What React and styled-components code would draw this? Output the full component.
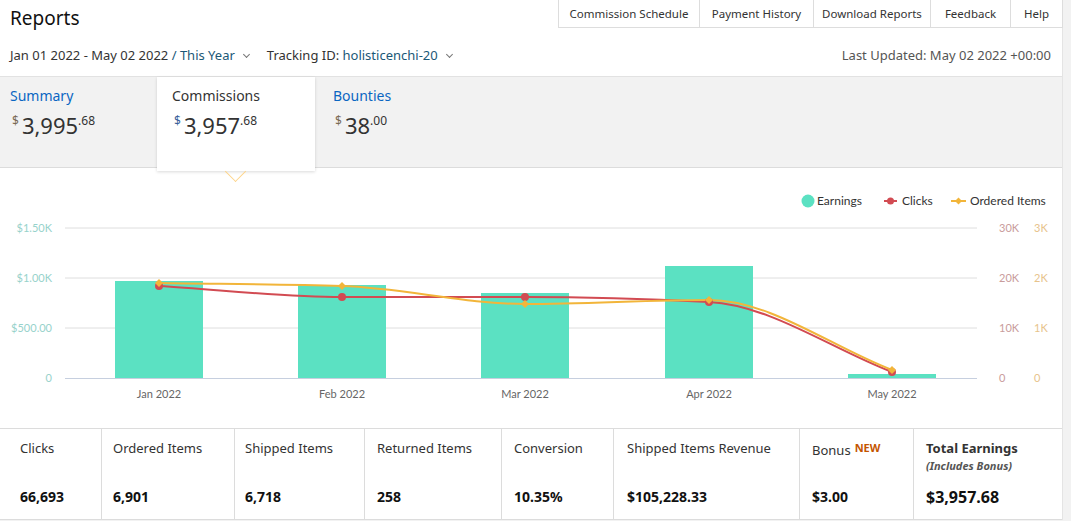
import React from 'react';
import styled, { createGlobalStyle } from 'styled-components';

const GlobalStyle = createGlobalStyle`
  body {
    margin: 0;
    background: #f2f2f2;
    font-family: "Noto Sans", "Open Sans", Arial, sans-serif;
    color: #333;
  }
`;

const Page = styled.div`
  width: 1063px;
  background: #fff;
  border-right: 1px solid #e4e4e4;
  box-sizing: border-box;
`;

const TopBar = styled.div`
  display: flex;
  justify-content: space-between;
  align-items: flex-start;
  height: 36px;
`;

const Title = styled.h1`
  margin: 0;
  padding: 5px 10px;
  font-size: 19px;
  font-weight: 400;
  line-height: 26px;
  color: #111;
`;

const Nav = styled.nav`
  display: flex;
  border-left: 1px solid #ddd;
  border-bottom: 1px solid #ddd;
  height: 27px;
  margin-right: -1px;
`;

const NavItem = styled.a`
  display: flex;
  align-items: center;
  justify-content: center;
  width: ${p => p.w}px;
  box-sizing: border-box;
  font-size: 11.5px;
  color: #333;
  border-right: 1px solid #ddd;
`;

const FilterRow = styled.div`
  display: flex;
  align-items: center;
  justify-content: space-between;
  height: 38px;
  padding: 0 11px 2px 10px;
  font-size: 13px;
`;

const Filters = styled.div`
  display: flex;
  gap: 16px;
`;

const Dropdown = styled.span`
  display: inline-flex;
  align-items: center;
  gap: 7px;
  color: #333;
`;

const Accent = styled.span`
  color: #1b5877;
`;

const Caret = styled.span`
  display: inline-block;
  width: 4px;
  height: 4px;
  border-right: 1px solid #777;
  border-bottom: 1px solid #777;
  transform: rotate(45deg);
  margin: 0 2px 2px;
`;

const Updated = styled.span`
  color: #555;
`;

const Band = styled.div`
  display: flex;
  align-items: flex-start;
  height: 90px;
  background: #f2f2f2;
  border-top: 1px solid #e2e2e2;
  border-bottom: 1px solid #dcdcdc;
`;

const Tab = styled.div`
  position: relative;
  width: ${p => (p.active ? 158 : 157)}px;
  height: ${p => (p.active ? 94 : 90)}px;
  box-sizing: border-box;
  padding: 9px 15px 0 ${p => p.pl || 15}px;
  background: ${p => (p.active ? '#fff' : 'transparent')};
  box-shadow: ${p => (p.active ? '0 1px 3px rgba(0,0,0,0.15)' : 'none')};
  z-index: ${p => (p.active ? 2 : 0)};

  &::after {
    content: '';
    display: ${p => (p.active ? 'block' : 'none')};
    position: absolute;
    left: 50%;
    top: calc(100% - 7px);
    width: 14px;
    height: 14px;
    margin-left: -8px;
    border-right: 1.5px solid #fdd489;
    border-bottom: 1.5px solid #fdd489;
    transform: rotate(45deg);
  }
`;

const TabLabel = styled.div`
  font-size: 14px;
  line-height: 20px;
  color: ${p => (p.active ? '#333' : '#0a66c2')};
`;

const Amount = styled.div`
  margin-top: 5px;
  font-size: 22px;
  line-height: 28px;
  color: #333;

  sup {
    font-size: 12px;
    vertical-align: 9px;
    line-height: 0;
  }
`;

const Dollar = styled.sup`
  color: ${p => (p.active ? '#3a5f9a' : '#7a6a55')};
  margin: 0 3px 0 2px;
`;

const ChartArea = styled.section`
  height: 260px;
`;

const Stats = styled.div`
  display: grid;
  grid-template-columns: 102px 133px 130px 137px 112px 186px 114px 149px;
  height: 92px;
  border-top: 1px solid #dcdcdc;
  border-bottom: 1px solid #dcdcdc;
  box-sizing: border-box;
`;

const Cell = styled.div`
  display: flex;
  flex-direction: column;
  justify-content: space-between;
  padding: 10px 10px 12px ${p => p.pl || 12}px;
  border-right: ${p => (p.last ? 'none' : '1px solid #dcdcdc')};
`;

const Label = styled.div`
  font-size: 13px;
  line-height: 18px;
  color: #333;
  font-weight: ${p => (p.strong ? 700 : 400)};
`;

const Note = styled.div`
  font-size: 11px;
  font-style: italic;
  font-weight: 700;
  color: #555;
  margin-top: 1px;
`;

const New = styled.span`
  font-size: 11px;
  font-weight: 700;
  color: #c45500;
  vertical-align: 3px;
  margin-left: 4px;
`;

const Value = styled.div`
  font-size: ${p => (p.big ? 16 : 14)}px;
  font-weight: 700;
  color: #111;
  line-height: 20px;
`;

// chart geometry
const months = ['Jan 2022', 'Feb 2022', 'Mar 2022', 'Apr 2022', 'May 2022'];
const xs = [159, 342, 525, 709, 892];
const earnings = [970, 930, 850, 1120, 40];
const clicks = [18400, 16200, 16200, 15200, 1200];
const ordered = [1900, 1840, 1480, 1560, 160];
const base = 210;
const yE = v => base - v * 0.1;
const yC = v => base - v * 0.005;
const yO = v => base - v * 0.05;

function monotone(pts) {
  const n = pts.length;
  const dx = [], m = [];
  for (let i = 0; i < n - 1; i++) {
    dx[i] = pts[i + 1][0] - pts[i][0];
    m[i] = (pts[i + 1][1] - pts[i][1]) / dx[i];
  }
  const t = [m[0]];
  for (let i = 1; i < n - 1; i++) {
    if (m[i - 1] * m[i] <= 0) t[i] = 0;
    else t[i] = (3 * (dx[i - 1] + dx[i])) /
      ((2 * dx[i] + dx[i - 1]) / m[i - 1] + (dx[i] + 2 * dx[i - 1]) / m[i]);
  }
  t[n - 1] = m[n - 2];
  let d = `M${pts[0][0]},${pts[0][1]}`;
  for (let i = 0; i < n - 1; i++) {
    const [x0, y0] = pts[i];
    const [x1, y1] = pts[i + 1];
    const h = dx[i] / 3;
    d += ` C${x0 + h},${y0 + t[i] * h} ${x1 - h},${y1 - t[i + 1] * h} ${x1},${y1}`;
  }
  return d;
}

const RED = '#d24b52';
const ORANGE = '#f2b53a';
const TEAL = '#5be1c2';

const Diamond = ({ x, y, r = 4 }) => (
  <path d={`M${x},${y - r} L${x + r},${y} L${x},${y + r} L${x - r},${y} Z`} fill={ORANGE} />
);

const Chart = () => {
  const cPts = xs.map((x, i) => [x, yC(clicks[i])]);
  const oPts = xs.map((x, i) => [x, yO(ordered[i])]);
  return (
    <svg width="1063" height="260" style={{ display: 'block' }} fontFamily="Lato, 'Noto Sans', sans-serif">
      {/* legend */}
      <circle cx="808" cy="33" r="6.5" fill={TEAL} />
      <text x="817" y="37" fontSize="12" fill="#333">Earnings</text>
      <line x1="884" y1="33" x2="897" y2="33" stroke={RED} strokeWidth="2" />
      <circle cx="890.5" cy="33" r="3.5" fill={RED} />
      <text x="902" y="37" fontSize="12" fill="#333">Clicks</text>
      <line x1="951" y1="33" x2="966" y2="33" stroke={ORANGE} strokeWidth="2" />
      <Diamond x={958.5} y={33} r={3.5} />
      <text x="970" y="37" fontSize="12" fill="#333">Ordered Items</text>

      {/* grid */}
      {[60, 110, 160].map(y => (
        <line key={y} x1="65" x2="977" y1={y} y2={y} stroke="#dedede" strokeWidth="1" />
      ))}
      <line x1="65" x2="977" y1={base + 0.5} y2={base + 0.5} stroke="#c6cfdf" strokeWidth="1" />

      {/* left axis */}
      {[['$1.50K', 60], ['$1.00K', 110], ['$500.00', 160], ['0', 210]].map(([t, y]) => (
        <text key={t} x="52" y={y + 4} fontSize="11" fill="#97d2cb" textAnchor="end">{t}</text>
      ))}
      {/* right axes */}
      {[['30K', '3K', 60], ['20K', '2K', 110], ['10K', '1K', 160], ['0', '0', 210]].map(([a, b, y]) => (
        <g key={a}>
          <text x="999" y={y + 4} fontSize="11" fill="#c99c9c">{a}</text>
          <text x="1034" y={y + 4} fontSize="11" fill="#e7c38c">{b}</text>
        </g>
      ))}

      {/* bars */}
      {xs.map((x, i) => (
        <rect key={x} x={x - 44} y={yE(earnings[i])} width="88" height={base - yE(earnings[i])} fill={TEAL} />
      ))}

      {/* month labels */}
      {months.map((m, i) => (
        <text key={m} x={xs[i]} y="230" fontSize="11" fill="#666" textAnchor="middle">{m}</text>
      ))}

      {/* lines */}
      <path d={monotone(cPts)} fill="none" stroke={RED} strokeWidth="2" />
      <path d={monotone(oPts)} fill="none" stroke={ORANGE} strokeWidth="2" />
      {cPts.map(([x, y]) => <circle key={x} cx={x} cy={y} r="4" fill={RED} />)}
      {oPts.map(([x, y]) => <Diamond key={x} x={x} y={y} r={4} />)}
    </svg>
  );
};

const nav = [
  ['Commission Schedule', 141],
  ['Payment History', 114],
  ['Download Reports', 117],
  ['Feedback', 80],
  ['Help', 52],
];

const App = () => (
  <>
    <GlobalStyle />
    <Page>
      <TopBar>
        <Title>Reports</Title>
        <Nav>
          {nav.map(([t, w]) => <NavItem key={t} w={w}>{t}</NavItem>)}
        </Nav>
      </TopBar>

      <FilterRow>
        <Filters>
          <Dropdown>
            <span>Jan 01 2022 - May 02 2022 <Accent>/ This Year</Accent></span>
            <Caret />
          </Dropdown>
          <Dropdown>
            <span>Tracking ID: <Accent>holisticenchi-20</Accent></span>
            <Caret />
          </Dropdown>
        </Filters>
        <Updated>Last Updated: May 02 2022 +00:00</Updated>
      </FilterRow>

      <Band>
        <Tab pl={10}>
          <TabLabel>Summary</TabLabel>
          <Amount><Dollar>$</Dollar>3,995<sup>.68</sup></Amount>
        </Tab>
        <Tab active>
          <TabLabel active>Commissions</TabLabel>
          <Amount><Dollar active>$</Dollar>3,957<sup>.68</sup></Amount>
        </Tab>
        <Tab pl={18}>
          <TabLabel>Bounties</TabLabel>
          <Amount><Dollar>$</Dollar>38<sup>.00</sup></Amount>
        </Tab>
      </Band>

      <ChartArea>
        <Chart />
      </ChartArea>

      <Stats>
        <Cell pl={20}><Label>Clicks</Label><Value>66,693</Value></Cell>
        <Cell pl={11}><Label>Ordered Items</Label><Value>6,901</Value></Cell>
        <Cell pl={10}><Label>Shipped Items</Label><Value>6,718</Value></Cell>
        <Cell><Label>Returned Items</Label><Value>258</Value></Cell>
        <Cell><Label>Conversion</Label><Value>10.35%</Value></Cell>
        <Cell pl={13}><Label>Shipped Items Revenue</Label><Value>$105,228.33</Value></Cell>
        <Cell><Label>Bonus<New>NEW</New></Label><Value>$3.00</Value></Cell>
        <Cell last>
          <div>
            <Label strong>Total Earnings</Label>
            <Note>(Includes Bonus)</Note>
          </div>
          <Value big>$3,957.68</Value>
        </Cell>
      </Stats>
    </Page>
  </>
);

export default App;
